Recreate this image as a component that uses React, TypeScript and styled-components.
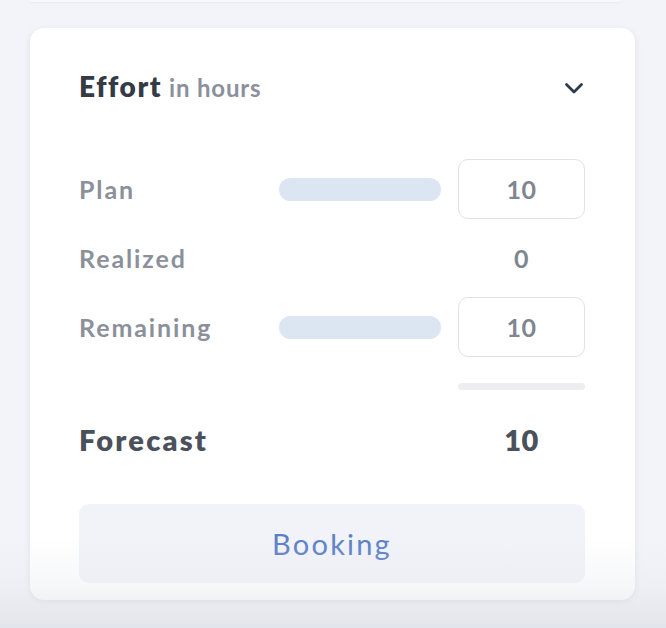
import React from "react";
import styled, { createGlobalStyle } from "styled-components";

const Global = createGlobalStyle`
  html, body { margin: 0; padding: 0; }
  body {
    background: #f3f4f9;
    font-family: Lato, "Open Sans", sans-serif;
    width: 666px;
    height: 628px;
    overflow: hidden;
  }
`;

const Page = styled.div`
  position: relative;
  width: 666px;
  height: 628px;
  display: flex;
  flex-direction: column;
`;

const PrevCard = styled.div`
  margin: 0 45px 0 30px;
  height: 2px;
  background: #f7f8fb;
  border-radius: 0 0 4px 4px;
  box-shadow: 0 1px 2px rgba(40, 50, 80, 0.05);
`;

const Card = styled.section`
  margin: 26px 0 0 30px;
  width: 605px;
  height: 572px;
  box-sizing: border-box;
  background: #ffffff;
  border-radius: 14px;
  box-shadow: 0 2px 6px rgba(40, 50, 80, 0.1);
  padding: 42px 50px 17px 49px;
  display: flex;
  flex-direction: column;
`;

const Header = styled.header`
  height: 32px;
  display: flex;
  align-items: center;
  justify-content: space-between;
`;

const Title = styled.h2`
  margin: 0;
  font-size: 28px;
  font-weight: 800;
  color: #353b45;
  letter-spacing: 1.6px;
  display: flex;
  align-items: baseline;
  gap: 7px;
`;

const Unit = styled.span`
  font-size: 24px;
  font-weight: 700;
  color: #8a909c;
  letter-spacing: 0.8px;
`;

const Chevron = styled.svg`
  margin-right: 1px;
  margin-top: 4px;
`;

const Rows = styled.div`
  margin-top: 57px;
  display: flex;
  flex-direction: column;
  gap: 9px;
`;

const Row = styled.div`
  height: 60px;
  display: grid;
  grid-template-columns: 200px 179px 127px;
  align-items: center;
`;

const Label = styled.span`
  font-size: 25px;
  font-weight: 700;
  color: #8b909b;
  letter-spacing: 1.9px;
`;

const Bar = styled.div`
  margin-right: 17px;
  height: 23px;
  border-radius: 12px;
  background: #dce6f3;
`;

const ValueBox = styled.div<{ $boxed?: boolean }>`
  grid-column: 3;
  height: 60px;
  box-sizing: border-box;
  border: ${(p) => (p.$boxed ? "1.5px solid #dfe2e7" : "none")};
  border-radius: 10px;
  display: flex;
  align-items: center;
  justify-content: center;
  font-size: 25px;
  font-weight: 700;
  letter-spacing: 0.5px;
  color: #80868f;
`;

const Divider = styled.div`
  margin: 26px 0 0 auto;
  width: 127px;
  height: 7px;
  border-radius: 4px;
  background: #eceef1;
`;

const ForecastRow = styled.div`
  margin-top: 29px;
  height: 40px;
  display: grid;
  grid-template-columns: 200px 179px 127px;
  align-items: center;
`;

const ForecastLabel = styled.span`
  font-size: 29px;
  font-weight: 800;
  letter-spacing: 2.2px;
  color: #4b515b;
`;

const ForecastValue = styled.span`
  grid-column: 3;
  text-align: center;
  font-size: 29px;
  font-weight: 800;
  letter-spacing: 0.5px;
  color: #4b515b;
`;

const BookingButton = styled.button`
  margin-top: auto;
  height: 79px;
  width: 100%;
  border: none;
  border-radius: 10px;
  background: #f1f3f8;
  font-family: inherit;
  font-size: 29px;
  font-weight: 400;
  letter-spacing: 2.2px;
  color: #5a7fc7;
  cursor: pointer;
`;

const BottomFade = styled.div`
  position: absolute;
  left: 0;
  right: 0;
  bottom: 0;
  height: 90px;
  pointer-events: none;
  background: linear-gradient(
    to bottom,
    rgba(225, 228, 234, 0) 0%,
    rgba(225, 228, 234, 0.3) 55%,
    rgba(222, 225, 231, 0.8) 100%
  );
`;

type RowDef = { label: string; value: string; bar?: boolean; boxed?: boolean };

const rows: RowDef[] = [
  { label: "Plan", value: "10", bar: true, boxed: true },
  { label: "Realized", value: "0" },
  { label: "Remaining", value: "10", bar: true, boxed: true },
];

export default function App() {
  return (
    <>
      <Global />
      <Page>
        <PrevCard />
        <Card>
          <Header>
            <Title>
              Effort <Unit>in hours</Unit>
            </Title>
            <Chevron width="20" height="13" viewBox="0 0 20 13" fill="none">
              <path
                d="M2.5 2.5 L10 10 L17.5 2.5"
                stroke="#2f3a4b"
                strokeWidth="2.8"
                strokeLinecap="round"
                strokeLinejoin="round"
              />
            </Chevron>
          </Header>
          <Rows>
            {rows.map((r) => (
              <Row key={r.label}>
                <Label>{r.label}</Label>
                {r.bar && <Bar />}
                <ValueBox $boxed={r.boxed}>{r.value}</ValueBox>
              </Row>
            ))}
          </Rows>
          <Divider />
          <ForecastRow>
            <ForecastLabel>Forecast</ForecastLabel>
            <ForecastValue>10</ForecastValue>
          </ForecastRow>
          <BookingButton>Booking</BookingButton>
        </Card>
        <BottomFade />
      </Page>
    </>
  );
}
